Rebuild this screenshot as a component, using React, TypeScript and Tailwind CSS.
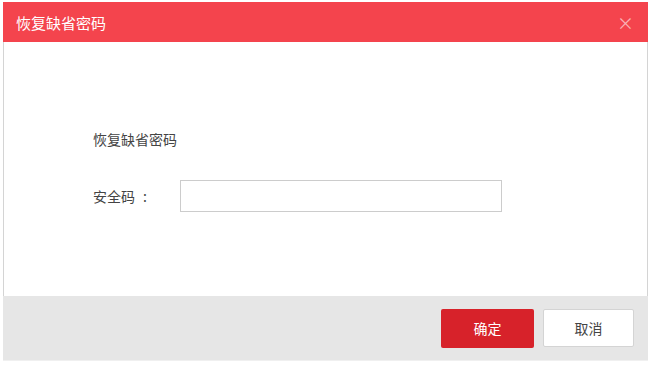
import React from "react";

export default function App() {
  return (
    <div
      className="w-[651px] h-[368px] bg-white pt-[2px] pl-[3px]"
      style={{ fontFamily: '"Noto Sans CJK SC", "Noto Sans", sans-serif' }}
    >
      <div className="w-[645px] flex flex-col">
        <div className="h-[40px] bg-[#f4444d] flex items-center justify-between pl-[13px] pr-[14px]">
          <span className="text-white text-[15px] leading-none">恢复缺省密码</span>
          <span className="text-[#f9b3b6] text-[17px] leading-none">×</span>
        </div>
        <div className="h-[254px] bg-white border-x border-[#d4d4d4] flex flex-col pl-[89px] pt-[87px]">
          <div className="text-[14px] text-[#444] leading-none h-[20px] flex items-center">恢复缺省密码</div>
          <div className="mt-[31px] flex items-center">
            <span className="w-[87px] text-[14px] text-[#444] flex items-center">
              安全码<span className="ml-[8px]">:</span>
            </span>
            <input className="w-[322px] h-[32px] border border-[#cccccc] bg-white outline-none" />
          </div>
        </div>
        <div className="h-[65px] bg-[#e6e6e6] border-b border-[#f0f0f0] flex items-center justify-end gap-[9px] pr-[14px]">
          <button className="w-[93px] h-[39px] bg-[#d7222a] text-white text-[14px] rounded-[2px]">确定</button>
          <button className="w-[91px] h-[38px] bg-white border border-[#d4d4d4] text-[#444] text-[14px] rounded-[2px]">取消</button>
        </div>
      </div>
    </div>
  );
}
